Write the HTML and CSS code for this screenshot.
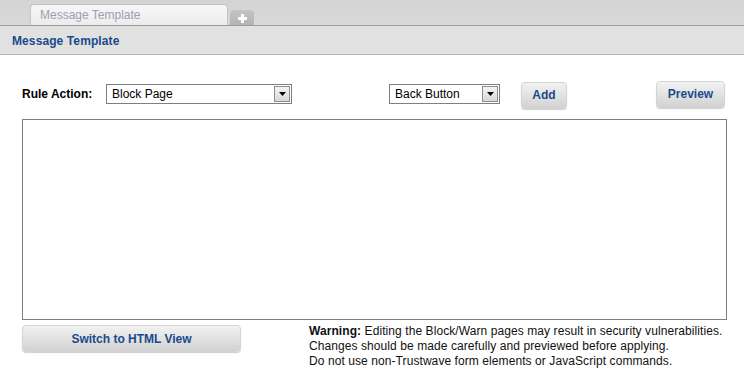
FILE: index.html
```html
<!DOCTYPE html>
<html>
<head>
<meta charset="utf-8">
<link rel="stylesheet" href="styles.css">
</head>
<body>
<div class="tabbar">
  <div class="tab">Message Template</div>
  <div class="tab-add"><svg width="11" height="11" viewBox="0 0 11 11"><rect x="4" y="1" width="3" height="9" fill="#fff"/><rect x="1" y="4" width="9" height="3" fill="#fff"/></svg></div>
</div>
<div class="header">Message Template</div>
<div class="content">
  <div class="toolbar">
    <span class="label">Rule Action:</span>
    <div class="select sel-action"><span class="sel-text">Block Page</span><span class="sel-btn"><svg width="7" height="4" viewBox="0 0 7 4"><path d="M0 0H7L3.5 4Z" fill="#000"/></svg></span></div>
    <div class="select sel-insert"><span class="sel-text">Back Button</span><span class="sel-btn"><svg width="7" height="4" viewBox="0 0 7 4"><path d="M0 0H7L3.5 4Z" fill="#000"/></svg></span></div>
    <button class="btn btn-add">Add</button>
    <button class="btn btn-preview">Preview</button>
  </div>
  <div class="editor"></div>
  <div class="bottom">
    <button class="btn btn-switch">Switch to HTML View</button>
    <div class="warning"><b>Warning:</b> Editing the Block/Warn pages may result in security vulnerabilities.<br>Changes should be made carefully and previewed before applying.<br>Do not use non-Trustwave form elements or JavaScript commands.</div>
  </div>
</div>
</body>
</html>
```
FILE: styles.css
```css
* { box-sizing: border-box; }
body { margin: 0; background: #fff; font-family: "Liberation Sans", Arial, sans-serif; font-size: 12px; color: #000; width: 744px; height: 384px; overflow: hidden; }
.tabbar { height: 26px; background: linear-gradient(#d4d4d4, #d8d8d8); border-bottom: 1px solid #9c9c9c; display: flex; align-items: flex-end; padding-left: 30px; }
.tab { width: 198px; height: 21px; background: linear-gradient(#f6f6f6, #ececec); border: 1px solid #c4c4c4; border-bottom: none; border-radius: 4px 4px 0 0; color: #a49cb4; font-size: 12px; padding: 3px 0 0 9px; }
.tab-add { width: 24px; height: 15px; margin-left: 2px; background: linear-gradient(#c4c4c4, #b4b4b4); border-radius: 4px 4px 0 0; display: flex; justify-content: center; align-items: center; padding-top: 1px; }
.header { height: 29px; background: #e1e1e1; border-bottom: 1px solid #b4b4b4; color: #1a4a8c; font-weight: bold; font-size: 12px; padding: 8px 0 0 12px; letter-spacing: 0.1px; }
.content { padding: 25px 17px 0 22px; }
.toolbar { display: flex; align-items: center; height: 28px; }
.label { font-weight: bold; width: 84px; }
.select { height: 20px; border: 1px solid #7f7f7f; display: flex; align-items: center; justify-content: space-between; padding: 0 1px 0 5px; font-size: 12px; background: #fff; }
.sel-action { width: 186px; }
.sel-insert { width: 111px; margin-left: 97px; }
.sel-btn { width: 16px; height: 16px; border: 1px solid #8c8c8c; background: linear-gradient(#f4f4f4, #d8d8d8); display: flex; align-items: center; justify-content: center; }
.btn { font-family: "Liberation Sans", Arial, sans-serif; font-weight: bold; font-size: 12px; color: #1a4a8c; border: 1px solid #d4d4d4; border-radius: 4px; background: linear-gradient(#f2f2f2, #d2d2d2); box-shadow: 0 1px 1px #cfcfcf; padding: 0; cursor: pointer; }
.btn-add { width: 46px; height: 27px; margin-left: 21px; margin-top: 2px; }
.btn-preview { width: 69px; height: 27px; margin-left: auto; margin-right: 2px; }
.editor { height: 201px; border: 1px solid #7f7f7f; margin-top: 11px; }
.bottom { display: flex; margin-top: 5px; }
.btn-switch { width: 219px; height: 27px; flex: none; }
.warning { margin-left: 68px; margin-top: -1px; line-height: 15px; font-size: 12px; color: #111; letter-spacing: 0.08px; }
.warning b { font-weight: bold; }
```
